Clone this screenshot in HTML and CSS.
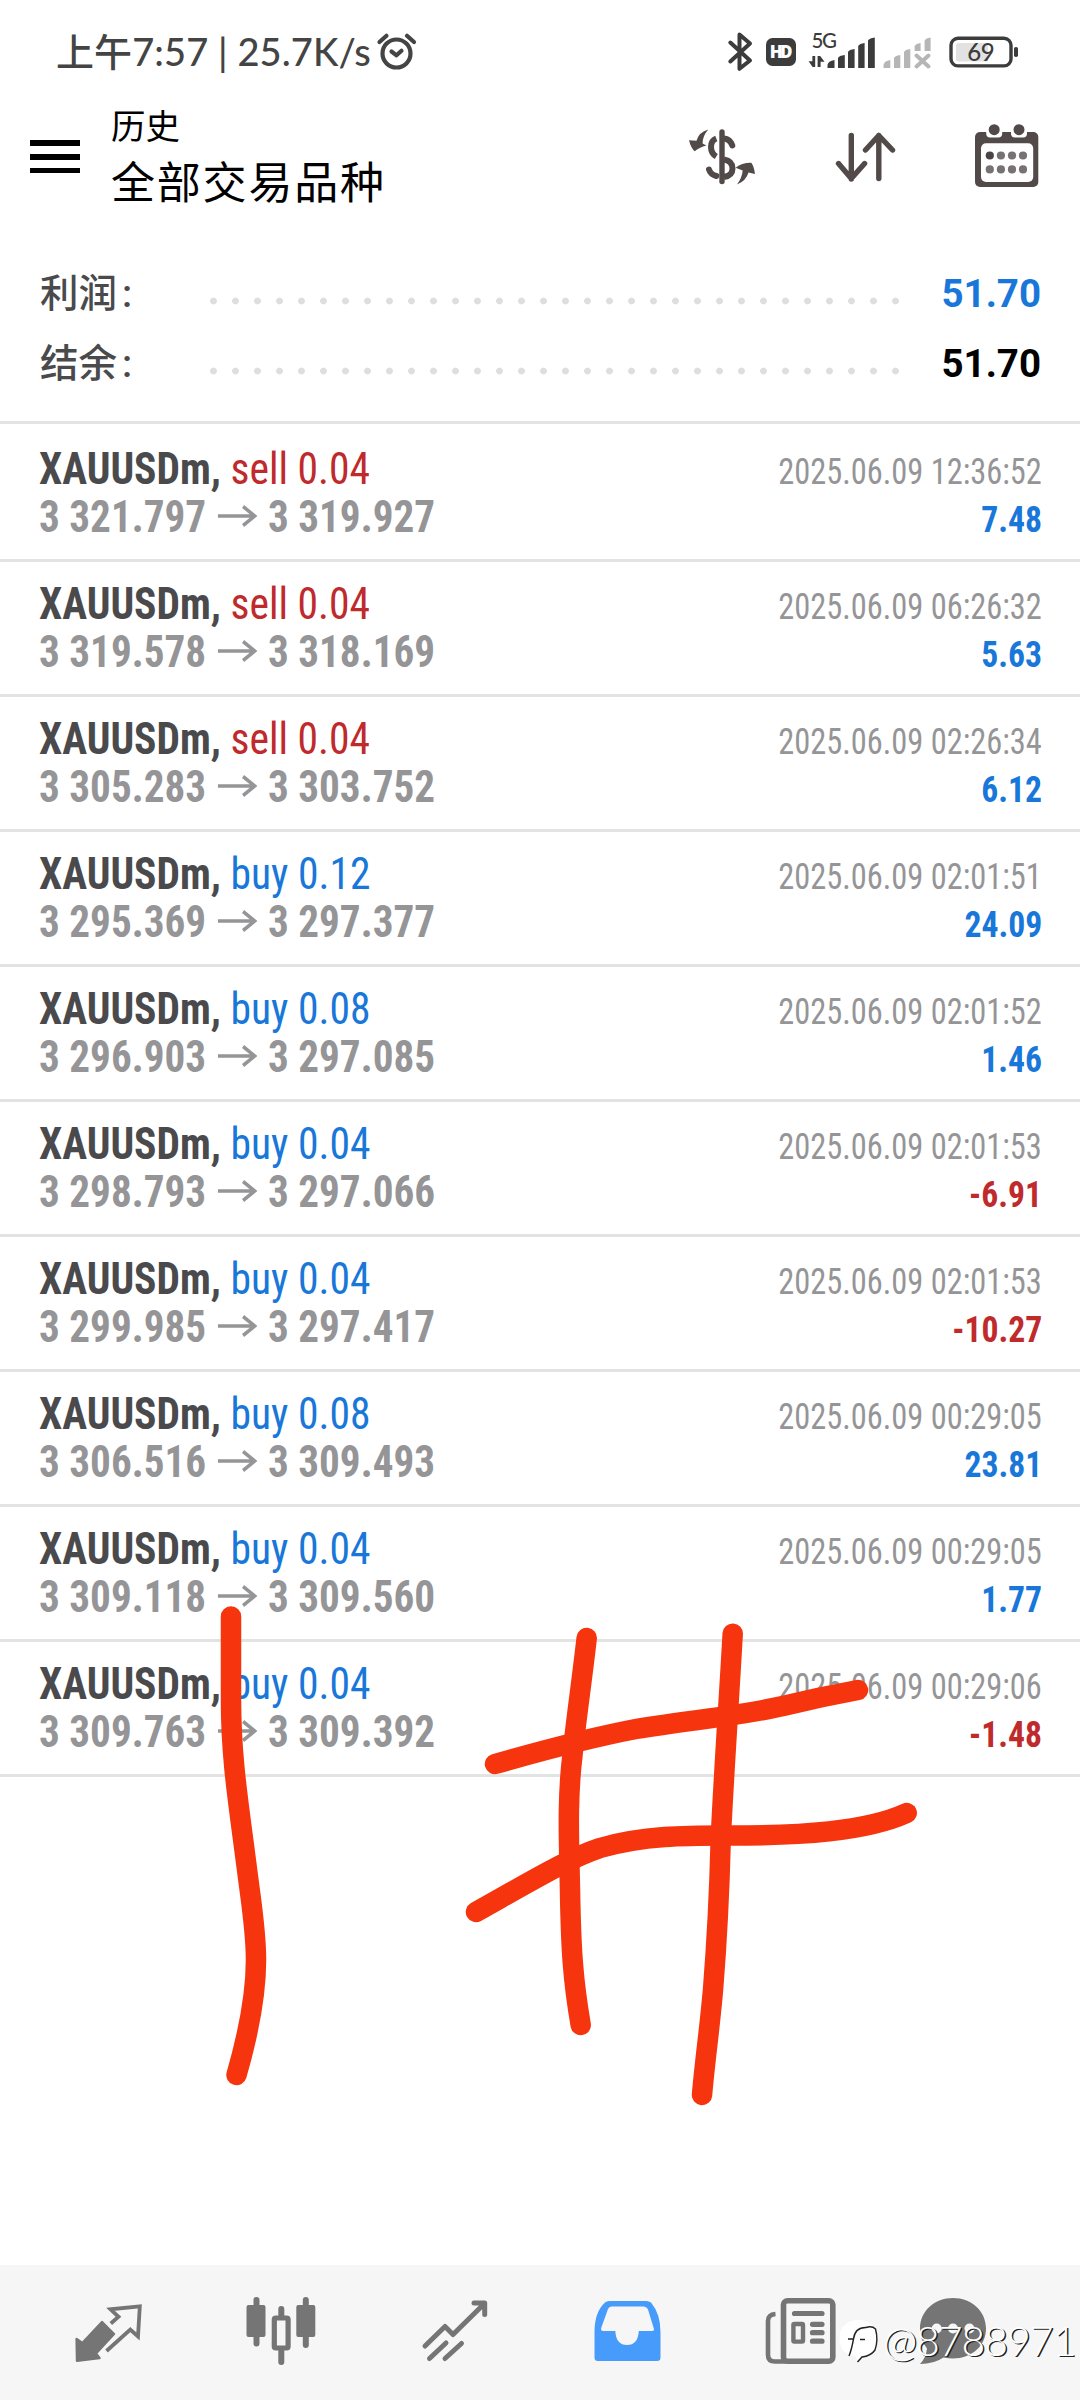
FILE: index.html
```html
<!DOCTYPE html>
<html lang="zh-CN">
<head>
<meta charset="utf-8">
<title>历史</title>
<link rel="stylesheet" href="styles.css">
</head>
<body>
<div class="screen">
  <div class="status">
    <span class="status-text">上午7:57 | 25.7K/s</span>
    <svg class="alarm" viewBox="376 32 42 40" width="42" height="40">
      <g fill="none" stroke="#444" stroke-width="4.2" stroke-linecap="round" stroke-linejoin="round">
        <circle cx="396.5" cy="53.5" r="14"/>
        <path d="M379.5 42l7-6.2M414 42l-7-6.2M391.5 51.5l5 3.8 5-4.5"/>
      </g>
    </svg>
    <svg class="indicators" viewBox="724 20 298 54" width="298" height="54">
      <path d="M730.3 42.5L750 60.5L739.5 68.8V34.5L750 43.5L730.3 61.5" fill="none" stroke="#3c3c3c" stroke-width="4" stroke-linecap="round" stroke-linejoin="round"/>
      <rect x="766" y="38" width="30" height="28" rx="6.5" fill="#3c3c3c"/>
      <text class="hd" x="769.8" y="57.8" textLength="22.6">HD</text>
      <text class="net" x="811.5" y="47.8" textLength="25.5">5G</text>
      <path d="M815.2 56V67H812.6L808.6 61.2H812.4V56zM817.6 67V56H820.2L824.5 61.8H820.6V67z" fill="#3c3c3c"/>
      <path d="M827.5 68V65Q828 61 834.5 60V68zM838 68V58Q839 55.5 844.8 55V68zM848 68V52Q849 49.5 854.6 49V68zM858.2 68V46Q859.5 43.5 864.6 43V68zM868 68V40.5Q869.5 38 874.8 37.5V68z" fill="#3c3c3c"/>
      <path d="M883.5 68V65Q884 61 890.3 60V68zM894 68V58Q895 55.5 900.3 55V68zM904 68V52Q905 49.5 910.3 49V68zM914.6 51V46Q916 43.5 920.6 43V51zM924.6 51V40.5Q926 38 930.6 37.5V51z" fill="#b6b6b6"/>
      <path d="M916.5 55.5l12 11M928.5 55.5l-12 11" stroke="#b6b6b6" stroke-width="4" stroke-linecap="round"/>
      <path d="M959 43H988V61.5H959a3 3 0 0 1-3-3V46a3 3 0 0 1 3-3z" fill="#e2e2e2"/>
      <rect x="951" y="38.3" width="60" height="27.6" rx="7" fill="none" stroke="#3c3c3c" stroke-width="3.4"/>
      <rect x="1014" y="47" width="4" height="10" rx="1.8" fill="#3c3c3c"/>
      <text class="batt" x="967.3" y="61.2" textLength="27.4">69</text>
    </svg>
  </div>

  <header class="appbar">
    <div class="burger"><i></i><i></i><i></i></div>
    <div class="titles">
      <div class="sub">历史</div>
      <h1>全部交易品种</h1>
    </div>
    <div class="actions">
      <svg viewBox="687 126 70 62" width="70" height="62">
        <g fill="none" stroke="#524a49" stroke-width="6">
          <path d="M722 132V181.5" stroke-linecap="round" stroke-width="5.4"/>
          <path d="M716.3 138.5Q711 140.500 711 147Q711 153.500 716.3 156.500"/>
          <path d="M724 138.500Q730 139 732.300 145.500M709 169.500Q710.500 174.500 716.3 176" stroke-linecap="round"/>
          <path d="M724 159.500Q732.500 161 732.500 168.500Q732.500 175.500 724 177"/>
        </g>
        <path d="M708.300 129.500Q699 132 696.500 140.800L689 140.300Q691 148.500 694.800 151.300Q698 148 706.300 145.500L702.600 143.400Q702.500 136 708.300 129.500zM737 184.500Q746 181 748.500 172.500L755 174Q754 166 751.300 162.700Q742 162.500 735.600 167.700L742.700 170.600Q742 178 737 184.500z" fill="#524a49"/>
      </svg>
      <svg viewBox="832 130 66 54" width="66" height="54">
        <path d="M851.300 135.500V179M838.500 163.500L851.300 178.500L864.600 163.500M878.800 178.500V135.500M865.500 150L878.800 135.500L892.500 150" fill="none" stroke="#524a49" stroke-width="5.400" stroke-linecap="round" stroke-linejoin="round"/>
      </svg>
      <svg viewBox="974 122 66 66" width="66" height="66">
        <rect x="975" y="132" width="63.300" height="55" rx="5" fill="#524a49"/>
        <rect x="981" y="143.300" width="52.200" height="38.700" rx="5" fill="#fff"/>
        <path d="M986.200 131H1002.200V133.500a4 4 0 0 1-4 4H990.200a4 4 0 0 1-4-4zM1011 131H1027V133.500a4 4 0 0 1-4 4H1015a4 4 0 0 1-4-4z" fill="#fff"/>
        <circle cx="994.200" cy="129.700" r="5.500" fill="#524a49"/><circle cx="1019" cy="129.700" r="5.500" fill="#524a49"/>
        <g fill="#777172"><circle cx="989.800" cy="155.500" r="4.100" fill="#4a4446"/><circle cx="1000.900" cy="155.500" r="4.100"/><circle cx="1012" cy="155.500" r="4.100"/><circle cx="1023" cy="155.500" r="4.100"/><circle cx="989.800" cy="169.400" r="4.100"/><circle cx="1000.900" cy="169.400" r="4.100"/><circle cx="1012" cy="169.400" r="4.100"/><circle cx="1023" cy="169.400" r="4.100"/></g>
      </svg>
    </div>
  </header>

  <section class="summary">
    <div class="sum-row"><span class="label">利润<span>:</span></span><span class="dots"></span><b class="up">51.70</b></div>
    <div class="sum-row"><span class="label">结余<span>:</span></span><span class="dots"></span><b>51.70</b></div>
  </section>

  <svg width="0" height="0" class="defs"><symbol id="arrow" viewBox="0 0 42 22" preserveAspectRatio="none"><path d="M0 11H39M27 1.500L39.500 11L27 20.500" fill="none" stroke="#959597" stroke-width="3.600"/></symbol></svg>

  <main class="deals">
    <article class="deal"><div class="line"><span class="sym">XAUUSDm, <span class="sell">sell 0.04</span></span><time>2025.06.09 12:36:52</time></div><div class="line"><span class="price">3 321.797<svg><use href="#arrow"/></svg>3 319.927</span><b class="up">7.48</b></div></article>
    <article class="deal"><div class="line"><span class="sym">XAUUSDm, <span class="sell">sell 0.04</span></span><time>2025.06.09 06:26:32</time></div><div class="line"><span class="price">3 319.578<svg><use href="#arrow"/></svg>3 318.169</span><b class="up">5.63</b></div></article>
    <article class="deal"><div class="line"><span class="sym">XAUUSDm, <span class="sell">sell 0.04</span></span><time>2025.06.09 02:26:34</time></div><div class="line"><span class="price">3 305.283<svg><use href="#arrow"/></svg>3 303.752</span><b class="up">6.12</b></div></article>
    <article class="deal"><div class="line"><span class="sym">XAUUSDm, <span class="buy">buy 0.12</span></span><time>2025.06.09 02:01:51</time></div><div class="line"><span class="price">3 295.369<svg><use href="#arrow"/></svg>3 297.377</span><b class="up">24.09</b></div></article>
    <article class="deal"><div class="line"><span class="sym">XAUUSDm, <span class="buy">buy 0.08</span></span><time>2025.06.09 02:01:52</time></div><div class="line"><span class="price">3 296.903<svg><use href="#arrow"/></svg>3 297.085</span><b class="up">1.46</b></div></article>
    <article class="deal"><div class="line"><span class="sym">XAUUSDm, <span class="buy">buy 0.04</span></span><time>2025.06.09 02:01:53</time></div><div class="line"><span class="price">3 298.793<svg><use href="#arrow"/></svg>3 297.066</span><b class="down">-6.91</b></div></article>
    <article class="deal"><div class="line"><span class="sym">XAUUSDm, <span class="buy">buy 0.04</span></span><time>2025.06.09 02:01:53</time></div><div class="line"><span class="price">3 299.985<svg><use href="#arrow"/></svg>3 297.417</span><b class="down">-10.27</b></div></article>
    <article class="deal"><div class="line"><span class="sym">XAUUSDm, <span class="buy">buy 0.08</span></span><time>2025.06.09 00:29:05</time></div><div class="line"><span class="price">3 306.516<svg><use href="#arrow"/></svg>3 309.493</span><b class="up">23.81</b></div></article>
    <article class="deal"><div class="line"><span class="sym">XAUUSDm, <span class="buy">buy 0.04</span></span><time>2025.06.09 00:29:05</time></div><div class="line"><span class="price">3 309.118<svg><use href="#arrow"/></svg>3 309.560</span><b class="up">1.77</b></div></article>
    <article class="deal"><div class="line"><span class="sym">XAUUSDm, <span class="buy">buy 0.04</span></span><time>2025.06.09 00:29:06</time></div><div class="line"><span class="price">3 309.763<svg><use href="#arrow"/></svg>3 309.392</span><b class="down">-1.48</b></div></article>
  </main>

  <nav class="tabs">
    <svg viewBox="73 2295 70 70" width="70" height="70">
      <path d="M76.600 2338L82.300 2342L102 2321L114 2333L96 2352.500L99.500 2357L77 2359.800z" fill="#757575" stroke="#757575" stroke-width="2.400" stroke-linejoin="round"/>
      <path d="M110.800 2322.500L118.500 2315.800L110.500 2308.300L139.800 2305.300L138 2335.500L130.300 2328.500L106.500 2350" fill="none" stroke="#757575" stroke-width="3.800"/>
    </svg>
    <svg viewBox="246 2295 70 74" width="70" height="74">
      <path d="M256.500 2301V2344.500M281.300 2310V2320M281.300 2350V2363M305.800 2301V2346" stroke="#757575" stroke-width="6" stroke-linecap="round"/>
      <path d="M246.500 2308a2 2 0 0 1 2-2h15a2 2 0 0 1 2 2v28a2 2 0 0 1-2 2h-15a2 2 0 0 1-2-2zM296.300 2308a2 2 0 0 1 2-2h15a2 2 0 0 1 2 2v28a2 2 0 0 1-2 2h-15a2 2 0 0 1-2-2z" fill="#757575"/>
      <rect x="274.300" y="2319" width="13.800" height="30" rx="1.500" fill="#f6f6f6" stroke="#757575" stroke-width="5.200"/>
    </svg>
    <svg viewBox="420 2298 68 66" width="68" height="66">
      <path d="M424 2346L444 2326.500L452 2334.500L483 2304M473 2303H483.700V2314.500M445 2343L428.500 2358.500M460.500 2343.500L444 2358.500" fill="none" stroke="#757575" stroke-width="5" stroke-linecap="round" stroke-linejoin="round"/>
    </svg>
    <svg viewBox="593 2299 70 64" width="70" height="64">
      <path d="M594.500 2332Q594.500 2312 605 2302.500Q607 2301 609 2301H646.500Q649 2301 651 2302.500Q660.500 2314 660.500 2332V2357.500a3.500 3.500 0 0 1-3.500 3.500H598a3.500 3.500 0 0 1-3.500-3.500zM611.500 2306.500Q609 2306.700 608 2309L601 2328.500Q600.800 2331 603 2331H615.300Q616 2345 627 2345Q638 2345 638.800 2331H652Q654.500 2331 653.800 2328.500L648 2309.500Q646.500 2306.500 643 2306.500z" fill="#479bfa" fill-rule="evenodd"/>
    </svg>
    <svg viewBox="764 2295 74 72" width="74" height="72">
      <rect x="783.500" y="2300.800" width="49.300" height="60.400" rx="4" fill="none" stroke="#757575" stroke-width="5.600"/>
      <path d="M775.500 2314Q768 2314.500 768 2321V2355Q768 2361.500 775 2361.500H786" fill="none" stroke="#757575" stroke-width="4.600"/>
      <path d="M794.500 2313.500H822M812.500 2324.300H822M812.500 2332.700H822M812.500 2341.200H822" stroke="#757575" stroke-width="5.200" stroke-linecap="round"/>
      <rect x="793.400" y="2324" width="9.600" height="17.600" rx="1" fill="none" stroke="#757575" stroke-width="4.400"/>
    </svg>
    <svg viewBox="918 2295 70 72" width="70" height="72">
      <path d="M953 2298C971.500 2298 986 2311 986 2328.500C986 2346 971.500 2358.500 953 2358.500Q948 2358.500 943.500 2357.500Q934 2364 920 2364Q926 2358 927 2348.500Q920 2340 920 2328.500C920 2311 934.500 2298 953 2298z" fill="#757575"/>
      <g fill="#f6f6f6"><circle cx="936.700" cy="2328.500" r="5"/><circle cx="953" cy="2328.500" r="5"/><circle cx="969.500" cy="2328.500" r="5"/></g>
    </svg>
  </nav>

  <svg class="ink" viewBox="0 0 1080 2400" width="1080" height="2400">
    <g fill="none" stroke="#f6350f" stroke-width="20.500" stroke-linecap="round" stroke-linejoin="round">
      <path d="M231 1616.500V1700C231 1760 239 1806 246.700 1867C252 1909 256 1930 256 1960C256 1995 248 2035 236.500 2075"/>
      <path d="M586.700 1638C582 1680 576 1720 572.500 1755C567 1800 569 1840 570 1890C571 1950 573 1980 580.700 2025"/>
      <path d="M732.700 1633.700C729 1700 724 1770 720.700 1840C719 1910 717 1940 713 1990C709.500 2030 705 2060 702 2095"/>
      <path d="M495 1764Q583 1739 636 1729C690 1720 740 1716 783 1706Q820 1697 858 1690"/>
      <path d="M476 1912C540 1876 570 1858 600 1848C645 1835 690 1835.500 730 1835.500C800 1835.500 865 1832 906.700 1813"/>
    </g>
  </svg>

  <div class="watermark">
    <svg viewBox="838 2318 42 50" width="42" height="50">
      <path d="M858 2322C871 2322 877 2330 877 2340C877 2352 871 2356 862 2358L857 2364L856 2358C845 2357 839.500 2351 839.500 2340C839.500 2329 847 2322 858 2322z" fill="#fff"/>
      <path d="M866 2329.500Q872 2327.500 875.500 2331Q878.500 2342 875 2352Q871 2358 862 2359L857.500 2364M866.500 2329.500Q855 2329 853.500 2341H848M853.500 2341Q851.500 2352 849 2358M860 2341.500H865" fill="none" stroke="#222" stroke-width="1.400"/>
    </svg>
    <span>@8788971</span>
  </div>
</div>
</body>
</html>
```
FILE: styles.css
```css
* { box-sizing: border-box; }

body {
  margin: 0;
  background: #fff;
  font-family: Roboto, "Noto Sans CJK SC", sans-serif;
}

.screen {
  position: relative;
  display: flex;
  flex-direction: column;
  width: 1080px;
  height: 2400px;
  overflow: hidden;
}

/* Status bar */
.status {
  display: flex;
  align-items: flex-start;
  height: 104px;
  padding: 20px 58px 0 56px;
}

.status-text {
  width: 320px;
  margin-top: 8px;
  line-height: 46px;
  font-family: Lato, "Noto Sans CJK SC", sans-serif;
  font-size: 38px;
  font-weight: 500;
  letter-spacing: 0.1px;
  color: #444;
  white-space: nowrap;
}

.alarm { margin-top: 12px; }
.indicators { margin-left: auto; }
.hd { font: 800 17px "Open Sans", sans-serif; fill: #fff; }
.net { font: 500 20.5px Lato, sans-serif; fill: #3c3c3c; }
.batt { font: 500 24px Lato, sans-serif; fill: #3c3c3c; }

/* App bar */
.appbar {
  display: flex;
  height: 154px;
  padding: 0 40px 0 30px;
}

.burger {
  display: flex;
  flex-direction: column;
  gap: 8.2px;
  width: 50px;
  margin-top: 36.3px;
}

.burger i { height: 5.6px; background: #000; }

.titles { margin: 1px 0 0 31px; color: #000; }

.sub { font-size: 34.5px; line-height: 45px; }

h1 {
  margin: 0;
  font-size: 44px;
  font-weight: 400;
  letter-spacing: 1.8px;
  line-height: 68px;
}

.actions {
  display: flex;
  flex: 1;
  justify-content: flex-end;
  align-items: flex-start;
}

.actions svg:nth-child(1) { margin-top: 22px; }
.actions svg:nth-child(2) { margin: 26px 0 0 75px; }
.actions svg:nth-child(3) { margin: 18px 0 0 76px; }

/* Totals */
.summary {
  height: 166px;
  padding: 0 39px 0 40px;
  border-bottom: 3px solid #e3e3e4;
}

.sum-row {
  display: flex;
  align-items: center;
  height: 70px;
}

.label {
  width: 169px;
  margin-top: -6px;
  font-size: 38.5px;
  font-weight: 500;
  color: #4a4a4d;
  white-space: nowrap;
}

.label span { margin-left: 5px; }

.dots {
  width: 704px;
  height: 8px;
  margin-top: 15px;
  background: radial-gradient(circle at 4.5px 4px, #dedede 3px, transparent 3.8px) 0 0 / 22px 8px repeat-x;
}

.sum-row b { flex: 1; font-size: 38.5px; text-align: right; }

/* Deals */
.deals { flex: 1; padding-top: 3px; }

.deal {
  height: 135px;
  padding: 18px 38px 0 39px;
  border-bottom: 3px solid #e3e3e4;
  font-family: "Roboto Condensed", Roboto, sans-serif;
}

.line {
  display: flex;
  justify-content: space-between;
  align-items: baseline;
  height: 48px;
  line-height: 48px;
  white-space: nowrap;
}

/* The list uses a face slightly narrower than Roboto Condensed */
.sym, .price {
  font-size: 44px;
  font-weight: 700;
  transform: scaleX(0.944);
  transform-origin: left;
}

.sym { color: #4a4a4d; }
.sym span { font-weight: 400; }
.price { color: #959597; transform: scaleX(0.936); }
.price svg { width: 42px; height: 22px; margin: 0 12px; vertical-align: 5px; }

.deal time, .deal b { font-size: 36px; transform-origin: right; }
.deal time { color: #959597; transform: scaleX(0.9); }
.deal b { transform: scaleX(0.935); }

.up, .deal .up, .buy { color: #1877d8; }
.down, .sell { color: #bf2a2c; }

/* Tab bar */
.tabs {
  display: grid;
  grid-template-columns: repeat(5, 173.3px) 1fr;
  justify-items: center;
  align-items: center;
  height: 135px;
  padding: 0 62px 4px 21.3px;
  background: #f6f6f6;
}

.defs { position: absolute; }

.ink { position: absolute; left: 0; top: 0; }

.watermark {
  position: absolute;
  left: 838px;
  top: 2316px;
  display: flex;
  align-items: center;
  gap: 3px;
  font: 300 41px/48px Lato, sans-serif;
  letter-spacing: -1px;
  color: #fff;
  text-shadow: 1.5px 1px 0.5px #222;
}
```
